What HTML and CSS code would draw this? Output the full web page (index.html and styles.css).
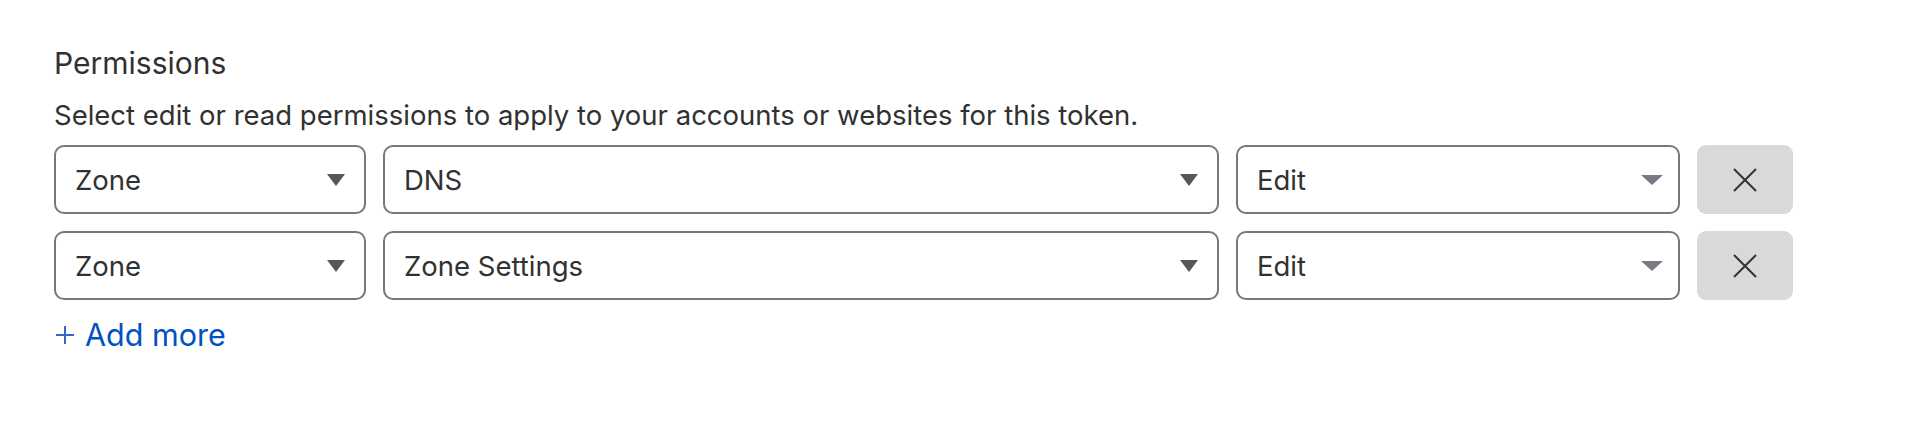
FILE: index.html
```html
<!DOCTYPE html>
<html lang="en">
<head>
<meta charset="utf-8">
<title>Permissions</title>
<link rel="stylesheet" href="styles.css">
</head>
<body>
<section class="perms">
  <h2 class="perms-title">Permissions</h2>
  <p class="perms-desc">Select edit or read permissions to apply to your accounts or websites for this token.</p>
  <div class="perm-list">
    <div class="perm-row">
      <div class="select select-scope"><span class="select-value">Zone</span><svg class="caret" width="18" height="12" viewBox="0 0 18 12"><path d="M0 0H18L9 12Z"/></svg></div>
      <div class="select select-item"><span class="select-value">DNS</span><svg class="caret" width="18" height="12" viewBox="0 0 18 12"><path d="M0 0H18L9 12Z"/></svg></div>
      <div class="select select-level"><span class="select-value">Edit</span><svg class="caret caret-light" width="22" height="10" viewBox="0 0 22 10"><path d="M0 0H22L11 10Z"/></svg></div>
      <button class="remove" type="button" aria-label="Remove"><svg width="24" height="24" viewBox="0 0 24 24"><path d="M1 1L23 23M23 1L1 23"/></svg></button>
    </div>
    <div class="perm-row">
      <div class="select select-scope"><span class="select-value">Zone</span><svg class="caret" width="18" height="12" viewBox="0 0 18 12"><path d="M0 0H18L9 12Z"/></svg></div>
      <div class="select select-item"><span class="select-value">Zone Settings</span><svg class="caret" width="18" height="12" viewBox="0 0 18 12"><path d="M0 0H18L9 12Z"/></svg></div>
      <div class="select select-level"><span class="select-value">Edit</span><svg class="caret caret-light" width="22" height="10" viewBox="0 0 22 10"><path d="M0 0H22L11 10Z"/></svg></div>
      <button class="remove" type="button" aria-label="Remove"><svg width="24" height="24" viewBox="0 0 24 24"><path d="M1 1L23 23M23 1L1 23"/></svg></button>
    </div>
  </div>
  <a class="add-more" href="#"><svg class="plus" width="18" height="18" viewBox="0 0 18 18"><path d="M9 0V18M0 9H18"/></svg><span>Add more</span></a>
</section>
</body>
</html>
```

FILE: styles.css
```css
* { box-sizing: border-box; }
html, body { margin: 0; padding: 0; background: #ffffff; }
body {
  font-family: Inter, "Liberation Sans", Arial, sans-serif;
  color: #313131;
}
.perms {
  padding: 45px 0 0 54px;
}
.perms-title {
  margin: 0;
  font-size: 30px;
  line-height: 36px;
  font-weight: 400;
  color: #313131;
}
.perms-desc {
  margin: 17px 0 0;
  font-size: 27.5px;
  line-height: 34px;
  color: #313131;
}
.perm-list {
  margin-top: 13px;
  display: flex;
  flex-direction: column;
  gap: 17px;
}
.perm-row {
  display: flex;
  gap: 17px;
  height: 69px;
}
.select {
  display: flex;
  align-items: center;
  justify-content: space-between;
  border: 2px solid #777777;
  border-radius: 10px;
  padding: 0 19px 0 19px;
  background: #ffffff;
  font-size: 27.5px;
}
.select-scope { width: 312px; }
.select-item { width: 836px; }
.select-level { width: 444px; padding-right: 15px; }
.caret { fill: #575757; flex: none; }
.caret-light { fill: #777c82; }
.remove {
  width: 96px;
  border: 0;
  border-radius: 9px;
  background: #d9d9d9;
  display: flex;
  align-items: center;
  justify-content: center;
  padding: 0;
}
.remove svg { stroke: #333333; stroke-width: 2; fill: none; }
.add-more {
  margin-top: 17px;
  display: inline-flex;
  align-items: center;
  gap: 11px;
  padding-left: 2px;
  color: #0051c3;
  text-decoration: none;
  font-size: 30.5px;
  line-height: 36px;
}
.plus { stroke: #2f69cc; stroke-width: 2; fill: none; }
```
